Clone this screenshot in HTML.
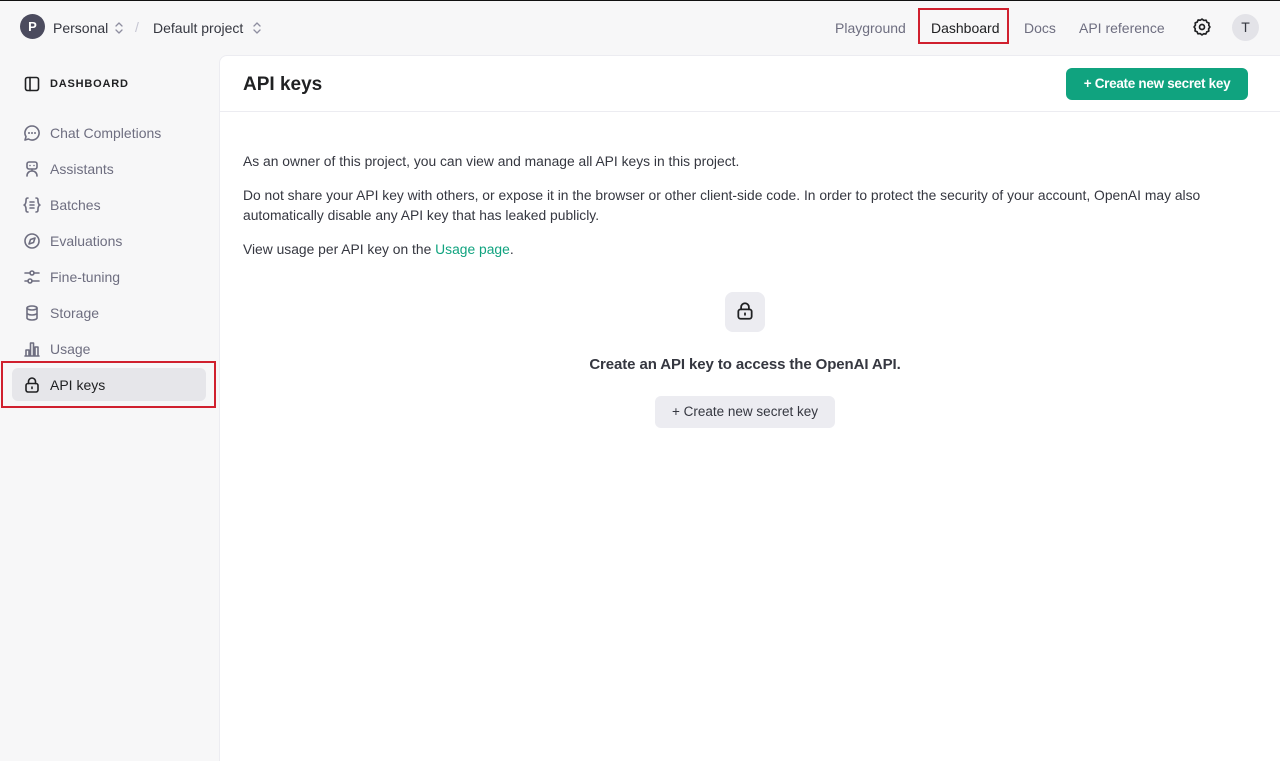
<!DOCTYPE html>
<html><head><meta charset="utf-8"><style>
*{box-sizing:border-box;margin:0;padding:0}
body{width:1280px;height:761px;overflow:hidden;background:#f7f7f8;font-family:"Liberation Sans",sans-serif;color:#202123;position:relative}
.a{position:absolute;white-space:nowrap}
.nav{font-size:14px;color:#6e6e80}
.side{font-size:14px;color:#6e6e80;left:50px}
svg{position:absolute;fill:none;stroke:#6e6e80;stroke-width:1.6;stroke-linecap:round;stroke-linejoin:round}
.main{position:absolute;left:219px;top:55px;width:1061px;height:706px;background:#fff;border-left:1px solid #ececf1;border-top:1px solid #ececf1;border-top-left-radius:8px}
.p{font-size:13.85px;color:#353740;line-height:20px}
</style></head><body>
<div class="a" style="left:0;top:0;width:1280px;height:1px;background:#111"></div>
<div class="a" style="left:20px;top:14px;width:25px;height:25px;border-radius:50%;background:#4b4b5e;color:#fff;font-size:13px;font-weight:bold;text-align:center;line-height:25px">P</div>
<div class="a" style="left:53px;top:20px;font-size:14px;color:#353740">Personal</div>
<svg style="left:114px;top:21px" width="10" height="14" viewBox="0 0 10 14"><path d="M2 5l3-3 3 3M2 9l3 3 3-3" stroke="#8e8ea0" stroke-width="1.3"/></svg>
<div class="a" style="left:135px;top:19px;font-size:14px;color:#c5c5d2">/</div>
<div class="a" style="left:153px;top:20px;font-size:14px;color:#353740">Default project</div>
<svg style="left:252px;top:21px" width="10" height="14" viewBox="0 0 10 14"><path d="M2 5l3-3 3 3M2 9l3 3 3-3" stroke="#8e8ea0" stroke-width="1.3"/></svg>
<div class="a nav" style="left:835px;top:20px">Playground</div>
<div class="a" style="left:918px;top:8px;width:91px;height:36px;border:2px solid #d0202e"></div>
<div class="a" style="left:931px;top:20px;font-size:14px;color:#202123">Dashboard</div>
<div class="a nav" style="left:1024px;top:20px">Docs</div>
<div class="a nav" style="left:1079px;top:20px">API reference</div>
<svg style="left:1192px;top:17px" width="20" height="20" viewBox="0 0 24 24"><path stroke="#202123" stroke-width="2" d="M12 2.5l2.2 1.6 2.7-.3 1 2.5 2.5 1-.3 2.7L21.5 12l-1.6 2.2.3 2.7-2.5 1-1 2.5-2.7-.3L12 21.5l-2.2-1.6-2.7.3-1-2.5-2.5-1 .3-2.7L2.5 12l1.6-2.2-.3-2.7 2.5-1 1-2.5 2.7.3z"/><circle stroke="#202123" stroke-width="2" cx="12" cy="12" r="3"/></svg>
<div class="a" style="left:1232px;top:14px;width:27px;height:27px;border-radius:50%;background:#e3e3e8;color:#353740;font-size:14px;text-align:center;line-height:27px">T</div>

<svg style="left:24px;top:76px" width="16" height="16" viewBox="0 0 16 16"><rect stroke="#202123" x="1.5" y="1.5" width="13" height="13" rx="2"/><path stroke="#202123" d="M6 1.5v13"/></svg>
<div class="a" style="left:50px;top:78px;font-size:11px;font-weight:bold;letter-spacing:.8px;color:#202123">DASHBOARD</div>

<svg style="left:23px;top:124px" width="18" height="18" viewBox="0 0 18 18"><path d="M9 2a7 7 0 1 1-3.5 13L2 16l1-3.3A7 7 0 0 1 9 2z"/><path d="M6 9h.01M9 9h.01M12 9h.01" stroke-width="2"/></svg>
<div class="a side" style="top:125px">Chat Completions</div>
<svg style="left:23px;top:160px" width="18" height="18" viewBox="0 0 18 18"><rect x="4" y="2" width="10" height="7" rx="2"/><path d="M7 5.5h.01M11 5.5h.01M4 16c0-3 2-5 5-5s5 2 5 5M9 9v2"/></svg>
<div class="a side" style="top:161px">Assistants</div>
<svg style="left:23px;top:196px" width="18" height="18" viewBox="0 0 18 18"><path d="M5 2c-2 0-2 1-2 3s-1 4-2 4c1 0 2 2 2 4s0 3 2 3M13 2c2 0 2 1 2 3s1 4 2 4c-1 0-2 2-2 4s0 3-2 3M7 6h4M7 9h4M7 12h4"/></svg>
<div class="a side" style="top:197px">Batches</div>
<svg style="left:23px;top:232px" width="18" height="18" viewBox="0 0 18 18"><circle cx="9" cy="9" r="7"/><path d="M12 6l-1.5 4.5L6 12l1.5-4.5z"/></svg>
<div class="a side" style="top:233px">Evaluations</div>
<svg style="left:23px;top:268px" width="18" height="18" viewBox="0 0 18 18"><path d="M2 5h5M11 5h5M2 13h3M9 13h7"/><circle cx="9" cy="5" r="2"/><circle cx="7" cy="13" r="2"/></svg>
<div class="a side" style="top:269px">Fine-tuning</div>
<svg style="left:23px;top:304px" width="18" height="18" viewBox="0 0 18 18"><ellipse cx="9" cy="4" rx="5" ry="2"/><path d="M4 4v10c0 1 2 2 5 2s5-1 5-2V4M4 9c0 1 2 2 5 2s5-1 5-2"/></svg>
<div class="a side" style="top:305px">Storage</div>
<svg style="left:23px;top:340px" width="18" height="18" viewBox="0 0 18 18"><path d="M2 16h14M3 16V10h3v6M7.5 16V3h3v13M12 16V7h3v9"/></svg>
<div class="a side" style="top:341px">Usage</div>
<div class="a" style="left:12px;top:368px;width:194px;height:33px;background:#e6e6ea;border-radius:6px"></div>
<div class="a" style="left:1px;top:361px;width:215px;height:47px;border:2px solid #d0202e"></div>
<svg style="left:23px;top:376px" width="18" height="18" viewBox="0 0 18 18"><rect stroke="#202123" x="3" y="7.5" width="12" height="8.5" rx="2"/><path stroke="#202123" d="M5.5 7.5V5.5a3.5 3.5 0 0 1 7 0v2M9 11v1.5"/></svg>
<div class="a side" style="top:377px;color:#202123">API keys</div>

<div class="main">
<div class="a" style="left:23px;top:18px;font-size:19px;font-weight:bold;color:#202123">API keys</div>
<div class="a" style="left:846px;top:12px;width:182px;height:32px;background:#10a37f;border-radius:6px;color:#fff;font-size:13.5px;font-weight:bold;line-height:32px;text-align:center;letter-spacing:-.3px">+ Create new secret key</div>
<div class="a" style="left:0;top:55px;width:1061px;height:1px;background:#ececf1"></div>
<div class="a p" style="left:23px;top:95px">As an owner of this project, you can view and manage all API keys in this project.</div>
<div class="a p" style="left:23px;top:129px">Do not share your API key with others, or expose it in the browser or other client-side code. In order to protect the security of your account, OpenAI may also<br>automatically disable any API key that has leaked publicly.</div>
<div class="a p" style="left:23px;top:183px">View usage per API key on the <span style="color:#10a37f">Usage page</span>.</div>
<div class="a" style="left:505px;top:236px;width:40px;height:40px;background:#ececf1;border-radius:8px"></div>
<svg style="left:515px;top:245px" width="20" height="20" viewBox="0 0 18 18"><rect stroke="#202123" x="3" y="7.5" width="12" height="8.5" rx="2"/><path stroke="#202123" d="M5.5 7.5V5.5a3.5 3.5 0 0 1 7 0v2M9 11v1.5"/></svg>
<div class="a" style="left:0;width:1050px;top:300px;text-align:center;font-size:15px;font-weight:bold;color:#353740;letter-spacing:-.1px">Create an API key to access the OpenAI API.</div>
<div class="a" style="left:435px;top:340px;width:180px;height:32px;background:#ececf1;border-radius:6px;font-size:13.5px;color:#353740;line-height:32px;text-align:center">+ Create new secret key</div>
</div>
</body></html>
